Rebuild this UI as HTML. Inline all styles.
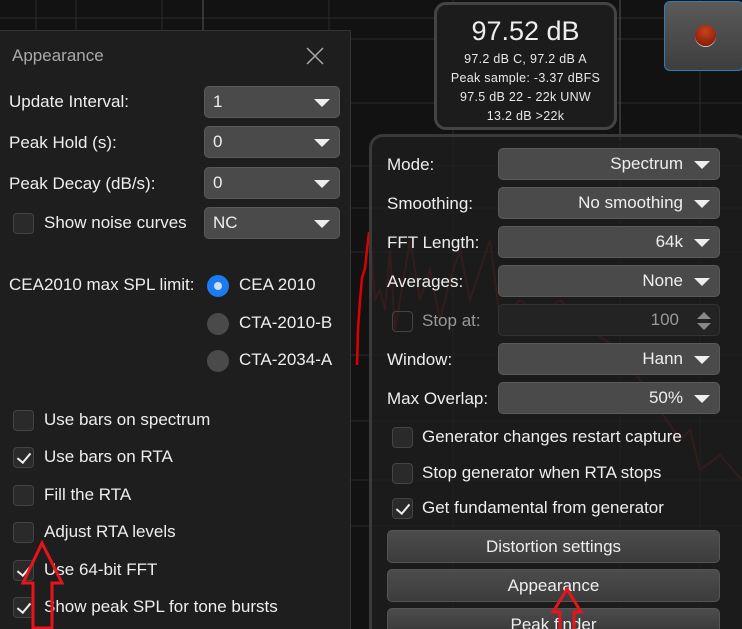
<!DOCTYPE html>
<html style="overflow:hidden;height:629px"><head><meta charset="utf-8"><style>
*{box-sizing:border-box;margin:0;padding:0}
html,body{width:742px;height:629px;overflow:hidden}
body{background:#121212;font-family:"Liberation Sans",sans-serif;color:#e8e8e8;position:relative;font-size:17px}
.a{position:absolute}
.dd{position:absolute;background:#4a4a4a;border:1px solid #5a5a5a;border-radius:5px;height:32px;line-height:30px;font-size:17px;color:#eee}
.dd.l{padding-left:8px}
.dd.r{text-align:right;padding-right:36px}
.dd:after{content:"";position:absolute;right:9px;top:12px;border-left:8px solid transparent;border-right:8px solid transparent;border-top:8px solid #eee}
.lbl{position:absolute;font-size:17px;color:#eee;white-space:nowrap}
.cb{position:absolute;width:21px;height:21px;border:1px solid #444;border-radius:4px;background:#2a2a2a}
.cb.c:after{content:"";position:absolute;left:6px;top:2px;width:6px;height:11px;border-right:2.5px solid #eee;border-bottom:2.5px solid #eee;transform:rotate(40deg)}
.rd{position:absolute;width:22px;height:22px;border-radius:50%;background:#4a4a4a}
.btn{position:absolute;left:387px;width:333px;height:33px;border-radius:5px;background:linear-gradient(#4c4c4c,#3c3c3c);border:1px solid #555;text-align:center;line-height:31px;font-size:17px;color:#eee}
</style></head><body>
<svg class="a" style="left:0;top:0" width="742" height="629">
<g stroke="#2a2a2a" stroke-width="1">
<line x1="36" y1="0" x2="36" y2="629"/><line x1="76" y1="0" x2="76" y2="629"/><line x1="162" y1="0" x2="162" y2="629"/><line x1="203" y1="0" x2="203" y2="629"/><line x1="329" y1="0" x2="329" y2="629"/><line x1="453" y1="0" x2="453" y2="629"/><line x1="620" y1="0" x2="620" y2="629"/><line x1="700" y1="0" x2="700" y2="629"/>
<line x1="0" y1="18" x2="742" y2="18"/><line x1="0" y1="39" x2="742" y2="39"/><line x1="0" y1="103" x2="742" y2="103"/><line x1="0" y1="166" x2="742" y2="166"/><line x1="0" y1="208" x2="742" y2="208"/><line x1="0" y1="252" x2="742" y2="252"/><line x1="0" y1="355" x2="742" y2="355"/><line x1="0" y1="421" x2="742" y2="421"/><line x1="0" y1="480" x2="742" y2="480"/><line x1="0" y1="526" x2="742" y2="526"/>
</g>
<line x1="203" y1="0" x2="203" y2="30" stroke="#555"/><line x1="620" y1="0" x2="620" y2="140" stroke="#555"/>
<path d="M357 365 L358 330 L360 300 L362 278 L365 268 L367 250 L369 232" stroke="#d00" stroke-width="2.5" fill="none"/>
<path d="M370 232 L375 300 L380 290 L385 310 L390 250 L395 330 L400 300 L410 240 L420 300 L430 270 L440 320 L450 280 L460 250 L470 300 L480 270 L490 240 L500 320 L520 300 L540 315 L560 300 L590 330 L620 350 L640 380 L660 410 L680 440 L690 430 L700 470 L720 455 L742 480" stroke="#6a1616" stroke-width="2" fill="none"/>
</svg>
<div class="a" style="left:0;top:30px;width:351px;height:600px;background:#1e1e1e;border:1px solid #333;border-left:none"></div>
<div class="lbl" style="left:12px;top:46px;color:#aaa">Appearance</div>
<svg class="a" style="left:306px;top:47px" width="18" height="18"><path d="M1 1L17 17M17 1L1 17" stroke="#aaa" stroke-width="1.5"/></svg>
<div class="lbl" style="left:9px;top:92px">Update Interval:</div>
<div class="dd l" style="left:204px;top:86px;width:136px">1</div>
<div class="lbl" style="left:9px;top:133px">Peak Hold (s):</div>
<div class="dd l" style="left:204px;top:126px;width:136px">0</div>
<div class="lbl" style="left:9px;top:174px">Peak Decay (dB/s):</div>
<div class="dd l" style="left:204px;top:167px;width:136px">0</div>
<div class="cb" style="left:13px;top:213px"></div>
<div class="lbl" style="left:44px;top:213px">Show noise curves</div>
<div class="dd l" style="left:204px;top:207px;width:136px">NC</div>
<div class="lbl" style="left:9px;top:275px">CEA2010 max SPL limit:</div>
<div class="rd" style="left:207px;top:275px;background:#1a7cf0"><div class="a" style="left:7px;top:7px;width:8px;height:8px;border-radius:50%;background:#cfe0f5"></div></div>
<div class="lbl" style="left:239px;top:275px">CEA 2010</div>
<div class="rd" style="left:207px;top:313px"></div>
<div class="lbl" style="left:239px;top:313px">CTA-2010-B</div>
<div class="rd" style="left:207px;top:350px"></div>
<div class="lbl" style="left:239px;top:350px">CTA-2034-A</div>
<div class="cb" style="left:13px;top:410px"></div><div class="lbl" style="left:44px;top:410px">Use bars on spectrum</div>
<div class="cb c" style="left:13px;top:447px"></div><div class="lbl" style="left:44px;top:447px">Use bars on RTA</div>
<div class="cb" style="left:13px;top:485px"></div><div class="lbl" style="left:44px;top:485px">Fill the RTA</div>
<div class="cb" style="left:13px;top:522px"></div><div class="lbl" style="left:44px;top:522px">Adjust RTA levels</div>
<div class="cb c" style="left:13px;top:560px"></div><div class="lbl" style="left:44px;top:560px">Use 64-bit FFT</div>
<div class="cb c" style="left:13px;top:597px"></div><div class="lbl" style="left:44px;top:597px">Show peak SPL for tone bursts</div>

<div class="a" style="left:434px;top:2px;width:183px;height:128px;border:3px solid #444;border-radius:12px;background:#1c1c1c;text-align:center">
<div style="font-size:27px;margin-top:11px;color:#eee">97.52 dB</div>
<div style="font-size:12.5px;line-height:19px;margin-top:3px;letter-spacing:.3px">97.2 dB C, 97.2 dB A<br>Peak sample: -3.37 dBFS<br>97.5 dB 22 - 22k UNW<br>13.2 dB &gt;22k</div></div>
<div class="a" style="left:664px;top:1px;width:80px;height:70px;border:1.5px solid #2e7fb8;border-radius:6px;background:linear-gradient(#5a5a5a,#3e3e3e)">
<div class="a" style="left:30px;top:23px;width:21px;height:21px;border-radius:50%;background:radial-gradient(circle at 50% 30%,#c84020,#7a1500);box-shadow:0 1px 0 #ccc"></div></div>

<div class="a" style="left:369px;top:134px;width:380px;height:495px;border:3px solid #3a3a3a;border-bottom:none;border-radius:14px 14px 0 0;background:rgba(30,30,30,0.72)"></div>
<div class="lbl" style="left:387px;top:155px">Mode:</div><div class="dd r" style="left:498px;top:148px;width:222px">Spectrum</div>
<div class="lbl" style="left:387px;top:194px">Smoothing:</div><div class="dd r" style="left:498px;top:187px;width:222px">No smoothing</div>
<div class="lbl" style="left:387px;top:233px">FFT Length:</div><div class="dd r" style="left:498px;top:226px;width:222px">64k</div>
<div class="lbl" style="left:387px;top:272px">Averages:</div><div class="dd r" style="left:498px;top:265px;width:222px">None</div>
<div class="cb" style="left:392px;top:311px;background:none"></div><div class="lbl" style="left:422px;top:311px;color:#999">Stop at:</div>
<div class="a" style="left:498px;top:304px;width:222px;height:32px;border:1px solid #333;border-radius:5px;background:#232323;text-align:right;padding-right:40px;line-height:30px;color:#999">100</div>
<svg class="a" style="left:696px;top:311px" width="16" height="20"><path d="M1 8L8 1L15 8Z M1 12L8 19L15 12Z" fill="#888"/></svg>
<div class="lbl" style="left:387px;top:350px">Window:</div><div class="dd r" style="left:498px;top:343px;width:222px">Hann</div>
<div class="lbl" style="left:387px;top:389px">Max Overlap:</div><div class="dd r" style="left:498px;top:382px;width:222px">50%</div>
<div class="cb" style="left:392px;top:427px"></div><div class="lbl" style="left:422px;top:427px">Generator changes restart capture</div>
<div class="cb" style="left:392px;top:463px"></div><div class="lbl" style="left:422px;top:463px">Stop generator when RTA stops</div>
<div class="cb c" style="left:392px;top:498px"></div><div class="lbl" style="left:422px;top:498px">Get fundamental from generator</div>
<div class="btn" style="top:530px">Distortion settings</div>
<div class="btn" style="top:569px">Appearance</div>
<div class="btn" style="top:608px;height:21px;border-radius:5px 5px 0 0;border-bottom:none">Peak finder</div>

<svg class="a" style="left:0;top:0" width="742" height="629">
<path d="M42 543 L62 583 L52 583 L52 628 L33 628 L33 583 L23 583 Z" stroke="#e8141c" stroke-width="3" fill="none"/>
<path d="M567 589 L581 612 L574 612 L574 632 L560 632 L560 612 L553 612 Z" stroke="#e8141c" stroke-width="3" fill="none"/>
</svg>
</body></html>
